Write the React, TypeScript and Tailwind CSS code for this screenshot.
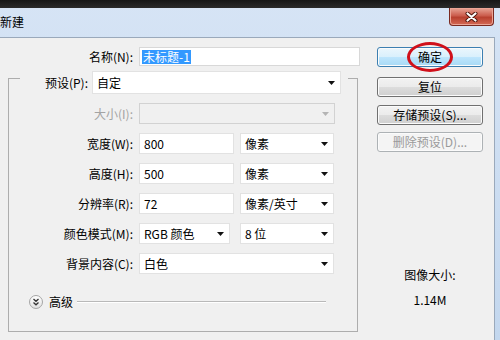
import type { ReactNode } from 'react'

const font = { fontFamily: '"Noto Sans CJK SC", "Noto Sans", sans-serif' }

function Arrow({ disabled = false }: { disabled?: boolean }) {
  return (
    <svg width="7" height="4" viewBox="0 0 7 4" className="shrink-0">
      <polygon points="0,0 7,0 3.5,4" fill={disabled ? '#b4b4b4' : '#111111'} />
    </svg>
  )
}

function Select({ value, className, disabled = false }: { value: string; className: string; disabled?: boolean }) {
  return (
    <div
      className={
        'flex items-center justify-between pl-[4px] pr-[5px] border ' +
        (disabled ? 'bg-[#f0f0f0] border-[#d2d2d2] ' : 'bg-white border-[#e2e2e2] ') +
        className
      }
    >
      <span>{value}</span>
      <Arrow disabled={disabled} />
    </div>
  )
}

function Field({ value, className }: { value: string; className: string }) {
  return <div className={'flex items-center pl-[4px] bg-white border border-[#e2e2e2] ' + className}>{value}</div>
}

function Row({ label, children, disabled = false }: { label: string; children: ReactNode; disabled?: boolean }) {
  return (
    <div className="flex items-center h-[21px] mt-[9px]">
      <div className={'w-[124px] text-right ' + (disabled ? 'text-[#a3a3a3]' : 'text-black')}>{label}</div>
      <div className="flex items-center ml-[6px] h-full">{children}</div>
    </div>
  )
}

function Button({ children, variant = 'normal' }: { children: ReactNode; variant?: 'normal' | 'default' | 'disabled' }) {
  const look =
    variant === 'default'
      ? 'border-[#3c7fb1] bg-[linear-gradient(#eaf6fd,#d9f0fc_50%,#bee6fd_50%,#a7d9f5)] text-black'
      : variant === 'disabled'
        ? 'border-[#adb2b5] bg-[#f4f4f4] text-[#9a9a9a]'
        : 'border-[#707070] bg-[linear-gradient(#f2f2f2,#ebebeb_50%,#dddddd_50%,#cfcfcf)] text-black'
  return (
    <div
      className={
        'w-[106px] h-[20px] flex items-center justify-center rounded-[3px] border shadow-[inset_0_0_0_1px_#fbfbfb] ' + look
      }
    >
      {children}
    </div>
  )
}

export default function App() {
  return (
    <div
      style={font}
      className="w-[500px] h-[340px] overflow-hidden bg-[linear-gradient(#d6e4f5,#c3d7ee)] text-[12px] leading-[14px] text-black"
    >
      {/* dark strip above the window */}
      <div className="h-[8px] bg-[linear-gradient(#161616,#2a2a2a)]" />

      {/* title bar */}
      <div className="h-[29px] flex items-start justify-between">
        <div className="mt-[7px] text-[12px] text-black">新建</div>
        <div className="mr-[6px] w-[45px] h-[18px] flex items-center justify-center rounded-b-[4px] border border-t-0 border-[#7a2a20] bg-[linear-gradient(#e8a596,#cb5d4d_45%,#b8402f_55%,#d46a55)] shadow-[inset_0_0_0_1px_#eba596]">
          <svg width="13" height="10" viewBox="0 0 13 10">
            <path d="M2.5 1.5 L10.5 8.5 M10.5 1.5 L2.5 8.5" stroke="#4a1208" strokeWidth="4" strokeLinecap="round" />
            <path d="M2.5 1.5 L10.5 8.5 M10.5 1.5 L2.5 8.5" stroke="#ffffff" strokeWidth="2.2" strokeLinecap="round" />
          </svg>
        </div>
      </div>

      {/* client area */}
      <div className="w-[495px] h-[303px] bg-[#f0f0f0] border-t border-r border-[#9aa9bb] flex">
        {/* form */}
        <div className="w-[377px] shrink-0">
          <div className="flex items-center h-[19px] mt-[9px]">
            <div className="w-[133px] text-right">名称(N):</div>
            <div className="ml-[6px] w-[221px] h-full flex items-center pl-[2px] bg-white border border-[#d8d8d8]">
              <span className="bg-[#3399ff] text-white px-[1px]">未标题-1</span>
            </div>
          </div>

          <div className="ml-[8px] mt-[12px] w-[350px] h-[254px] border border-[#adadad]">
            <div className="-mt-[8px] ml-[11px] w-[328px] h-[23px] bg-[#f0f0f0] flex items-center">
              <div className="w-[68px] text-right">预设(P):</div>
              <Select value="自定" className="ml-[4px] w-[249px] h-full" />
            </div>

            <Row label="大小(I):" disabled>
              <Select value="" disabled className="w-[196px] h-full" />
            </Row>
            <Row label="宽度(W):">
              <Field value="800" className="w-[95px] h-full" />
              <Select value="像素" className="ml-[6px] w-[94px] h-full" />
            </Row>
            <Row label="高度(H):">
              <Field value="500" className="w-[95px] h-full" />
              <Select value="像素" className="ml-[6px] w-[94px] h-full" />
            </Row>
            <Row label="分辨率(R):">
              <Field value="72" className="w-[95px] h-full" />
              <Select value="像素/英寸" className="ml-[6px] w-[94px] h-full" />
            </Row>
            <Row label="颜色模式(M):">
              <Select value="RGB 颜色" className="w-[91px] h-full" />
              <Select value="8 位" className="ml-[10px] w-[94px] h-full" />
            </Row>
            <Row label="背景内容(C):">
              <Select value="白色" className="w-[195px] h-full" />
            </Row>

            <div className="ml-[20px] mt-[21px] w-[297px] h-[14px] flex items-center">
              <div className="w-[14px] h-[14px] rounded-full border border-[#a5a5a5] bg-[linear-gradient(#ffffff,#e2e2e2)] flex items-center justify-center">
                <svg width="8" height="8" viewBox="0 0 8 8">
                  <path d="M1.5 1 L4 3.3 L6.5 1 M1.5 4.5 L4 6.8 L6.5 4.5" fill="none" stroke="#333333" strokeWidth="1.3" />
                </svg>
              </div>
              <span className="ml-[6px]">高级</span>
              <div className="ml-[4px] flex-1 h-[2px] border-t border-[#b9b9b9] border-b border-b-white" />
            </div>
          </div>
        </div>

        {/* buttons */}
        <div className="relative w-[106px] shrink-0 flex flex-col">
          <div className="mt-[9px]">
            <Button variant="default">确定</Button>
          </div>
          <div className="mt-[10px]">
            <Button>复位</Button>
          </div>
          <div className="mt-[8px]">
            <Button>存储预设(S)...</Button>
          </div>
          <div className="mt-[7px]">
            <Button variant="disabled">删除预设(D)...</Button>
          </div>
          <div className="mt-[116px] text-center">图像大小:</div>
          <div className="mt-[11px] text-center">1.14M</div>

          {/* red annotation ring */}
          <div className="absolute left-[30px] top-[4px] w-[46px] h-[30px] rounded-[50%] border-[3px] border-[#d0101a]" />
        </div>
      </div>
    </div>
  )
}
